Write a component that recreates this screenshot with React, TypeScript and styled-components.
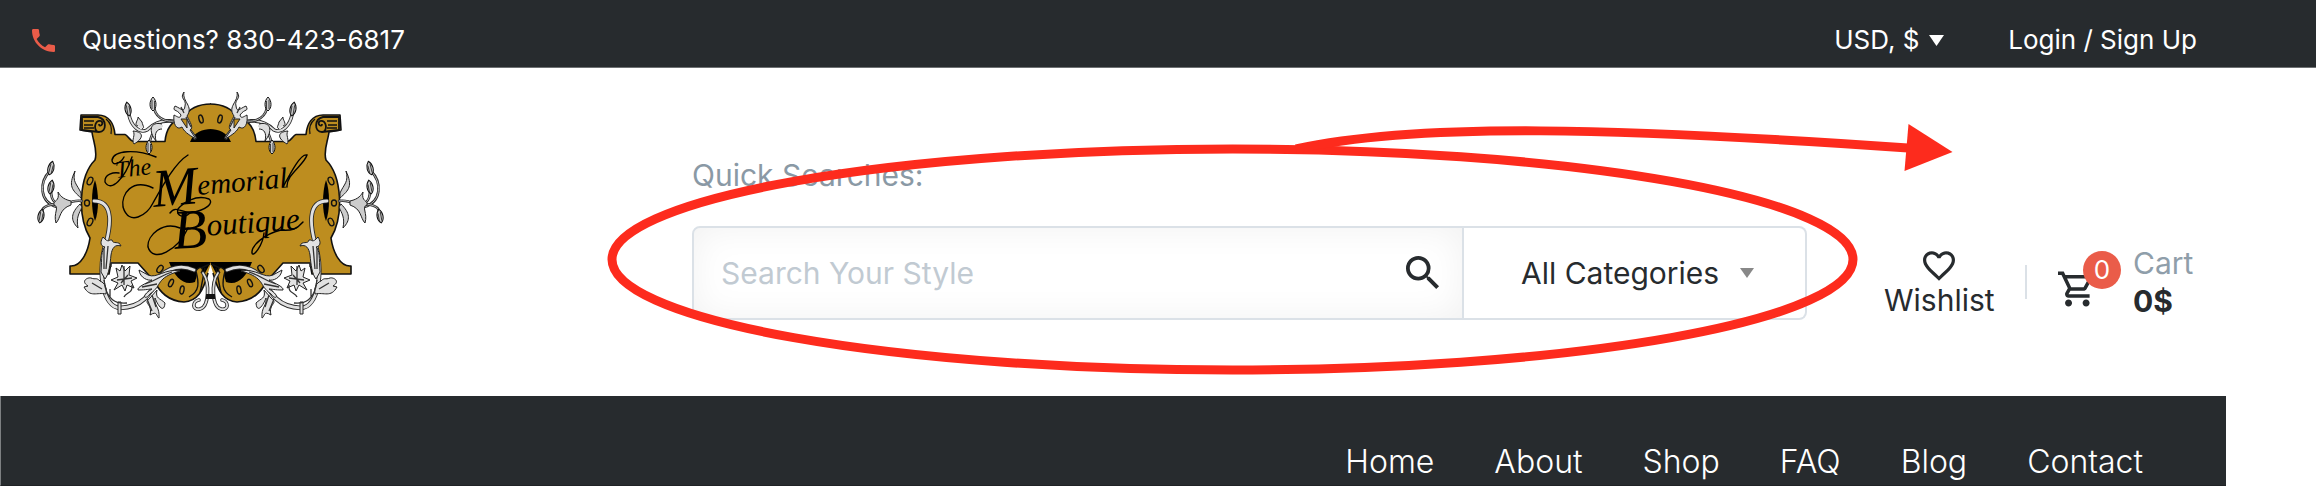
import React from "react";
import styled, { createGlobalStyle } from "styled-components";

const ink = "#272b2e";
const accent = "#ea5c49";
const gold = "#bd8d1f";
const line = "#dbe1e7";

const GlobalStyle = createGlobalStyle`
  * { box-sizing: border-box; }
  body {
    margin: 0;
    background: #fff;
    color: ${ink};
    font-family: Inter, "Open Sans", sans-serif;
    font-size: 30px;
    font-weight: 400;
  }
  a { color: inherit; text-decoration: none; }
  svg { display: block; }
`;

const TopBar = styled.div`
  display: flex;
  align-items: center;
  justify-content: space-between;
  padding: 20px 119px 7px 32px;
  background: ${ink};
  border-bottom: 1px solid #6e7173;
  color: #fff;
  font-size: 26px;
  line-height: 40px;
`;

const Phone = styled.a`
  display: flex;
  align-items: center;
  gap: 27px;
`;

const Account = styled.div`
  display: flex;
  align-items: center;
  gap: 64px;
`;

const SelectWrap = styled.label<{ $caretRight: number }>`
  position: relative;
  display: flex;
  align-items: center;
  svg {
    position: absolute;
    right: ${(p) => p.$caretRight}px;
    pointer-events: none;
  }
`;

const CurrencySelect = styled.select`
  appearance: none;
  width: 110px;
  padding: 0;
  border: 0;
  background: transparent;
  color: inherit;
  font: inherit;
`;

const Header = styled.header`
  display: flex;
  align-items: flex-end;
  padding: 24px 119px 76px 36px;
`;

const LogoLink = styled.a`
  flex: none;
  margin-right: 306px;
`;

const Search = styled.div`
  position: relative;
  flex: 1;
  margin-right: 77px;
`;

const Hint = styled.p`
  margin: 0 0 31px;
  color: #8a99a5;
  line-height: 40px;
`;

const SearchForm = styled.form`
  display: flex;
  height: 94px;
`;

const Field = styled.div`
  display: flex;
  align-items: center;
  flex: 1;
  padding: 0 22px 0 27px;
  border: 2px solid ${line};
  border-radius: 8px 0 0 8px;
  box-shadow: inset 0 0 36px rgba(0, 0, 0, 0.06);
`;

const SearchInput = styled.input`
  flex: 1;
  min-width: 0;
  padding: 0;
  border: 0;
  outline: 0;
  background: transparent;
  color: ${ink};
  font: inherit;
  &::placeholder { color: #c1cad2; opacity: 1; }
`;

const IconButton = styled.button`
  padding: 0;
  border: 0;
  background: transparent;
  color: ${ink};
  cursor: pointer;
`;

const CategorySelect = styled.select`
  appearance: none;
  width: 343px;
  height: 94px;
  padding: 0 0 0 57px;
  border: 2px solid ${line};
  border-left: 0;
  border-radius: 0 8px 8px 0;
  background: transparent;
  color: ${ink};
  font: inherit;
`;

const Annotation = styled.svg`
  position: absolute;
  left: -92px;
  bottom: -66px;
  pointer-events: none;
`;

const Actions = styled.div`
  display: flex;
  align-items: center;
  justify-content: space-between;
  width: 313px;
  line-height: 38px;
`;

const Wishlist = styled.a`
  display: flex;
  flex-direction: column;
  align-items: center;
  padding-top: 6px;
`;

const Divider = styled.span`
  width: 2px;
  height: 34px;
  background: ${line};
`;

const Cart = styled.a`
  display: flex;
  align-items: center;
  gap: 39px;
`;

const CartIcon = styled.span`
  position: relative;
  padding-top: 14px;
`;

const Badge = styled.span`
  position: absolute;
  top: -5px;
  left: 25px;
  width: 38px;
  border-radius: 50%;
  background: ${accent};
  color: #fff;
  font-size: 26px;
  line-height: 38px;
  text-align: center;
`;

const CartText = styled.span`
  display: flex;
  flex-direction: column;
  width: 64px;
  color: #8f9eaa;
  strong { color: ${ink}; font-weight: 700; }
`;

const Nav = styled.nav`
  display: flex;
  justify-content: flex-end;
  gap: 60px;
  margin-right: 90px;
  padding: 46px 83px 3px;
  background: ${ink};
  border-left: 1px solid #7d8082;
  border-bottom: 1px solid #1f2225;
  color: #fff;
  font-size: 32px;
  font-weight: 300;
  line-height: 40px;
`;

const Caret = ({ color, width, height }: { color: string; width: number; height: number }) => (
  <svg width={width} height={height} viewBox="0 0 14 10" preserveAspectRatio="none" aria-hidden="true">
    <path d="M0 0h14L7 10z" fill={color} />
  </svg>
);

const Leaf = ({ x, y, r }: { x: number; y: number; r: number }) => (
  <g transform={`translate(${x} ${y}) rotate(${r})`}>
    <path d="M0 7C-4 4-4-3 0-7C4-3 4 4 0 7Z" fill="#ccc" stroke="#111" strokeWidth="1" />
    <path d="M-1 5V-4M1.500 5V-3" stroke="#333" strokeWidth=".9" />
  </g>
);

const Vine = ({ d, w = 4 }: { d: string; w?: number }) => (
  <g fill="none" strokeLinecap="round">
    <path d={d} stroke="#2a2a2a" strokeWidth={w - 0.4} />
    <path d={d} stroke="#e0e0e0" strokeWidth={w - 2.2} />
  </g>
);

const Half = () => (
  <g strokeLinejoin="round">
    <path
      d="M211 104C197 104 188 110 183 118C172 119 166 130 165 141.500H134C129 141 128 135 125 134.500H115C114 124 109 115 98 115L81 115L80 130L92 132C93 141 98 151 95 160C79 176 77 216 90 238C88 252 81 267 70 266V274H109L111 263H138L154 281C160 292 168 301 184 302C197 301 203 292 208 273L211 263Z"
      fill={gold}
    />
    <path
      d="M211 104C197 104 188 110 183 118C172 119 166 130 165 141.500H134C129 141 128 135 125 134.500H115C114 124 109 115 98 115L81 115L80 130L92 132C93 141 98 151 95 160C79 176 77 216 90 238C88 252 81 267 70 266V274H109L111 263H138L154 281C160 292 168 301 184 302C197 301 203 292 208 273"
      fill="none" stroke="#111" strokeWidth="1.600"
    />
    <path d="M190 142C194 132 203 129 211 129V142ZM169 262H211L205 273L199 268L195 282C184 286 175 278 169 262Z" fill="#000" />
    <path d="M95 180C99 192 99 212 95 221C91 211 91 190 95 180Z" />
    <path d="M82 117H98C107 119 107 132 99 132L82 130ZM99 132C93 132 94 119 101 121C105 124 99 128 99 124" fill={gold} stroke="#111" strokeWidth="1.800" />
    <path d="M84 121H94M84 125H93M84 128H94M106 119C111 123 112 129 111 134" fill="none" stroke="#111" strokeWidth="1.300" />
    <path d="M189 297C200 291 199 283 196 271C200 264 205 269 201 273M205 268L200 293M201 268L210 264" fill={gold} stroke="#111" strokeWidth="1.400" />
    <g fill={gold} stroke="#111" strokeWidth="1.400">
      <ellipse cx="90" cy="181" rx="2.500" ry="4" transform="rotate(25 90 181)" />
      <ellipse cx="87" cy="203" rx="2.500" ry="3" />
      <ellipse cx="90" cy="222" rx="2.500" ry="4" transform="rotate(25 90 222)" />
      <ellipse cx="201" cy="119" rx="2" ry="4" transform="rotate(-15 201 119)" />
      <ellipse cx="160" cy="269" rx="2.500" ry="4" transform="rotate(35 160 269)" />
      <ellipse cx="171" cy="283" rx="2" ry="4" transform="rotate(25 171 283)" />
      <ellipse cx="182" cy="290" rx="2" ry="4" transform="rotate(10 182 290)" />
    </g>
    <Vine d="M195 138C181 114 158 119 147 130C139 134 131 125 129 115" />
    <Vine d="M180 120C170 123 157 121 154 108" w={3} />
    <Vine d="M161 126C153 129 151 137 149 144" w={3} />
    <Leaf x={128} y={109} r={-10} />
    <Leaf x={153} y={104} r={0} />
    <Leaf x={149} y={147} r={0} />
    <g fill="#ddd" stroke="#222" strokeWidth="1">
      <path d="M196 139C187 134 184 131 182 127C176 131 173 123 174 115C178 117 180 119 181 115C176 108 172 112 175 106C182 109 184 113 185 106C187 99 179 99 184 92C182 102 194 106 187 116C190 122 194 128 190 130Z" />
      <path d="M162 124C150 121 148 131 156 141C154 133 157 129 162 129M138 126C133 125 139 119 138 117L142 122C143 127 145 127 142 129M133 131C136 135 131 140 134 144C143 139 145 132 133 131" />
      <path d="M181 119L187 128L187 119Z" fill={gold} />
    </g>
    <Vine d="M82 201C71 199 65 206 57 207C39 202 39 182 50 171" w={3} />
    <Vine d="M59 205C51 201 51 195 51 190M55 204C42 206 42 209 41 216" w={3} />
    <Leaf x={51} y={168} r={14} />
    <Leaf x={51} y={187} r={10} />
    <Leaf x={41} y={216} r={10} />
    <g fill="#ccc" stroke="#222" strokeWidth="1">
      <path d="M81 198C72 190 68 186 75 171C72 182 77 184 81 193ZM80 204C71 213 70 220 78 228C76 217 79 214 82 207Z" />
      <path d="M71 201C62 199 60 195 58 192C60 202 53 200 54 205C60 207 53 213 56 223C61 218 59 209 71 205Z" />
    </g>
    <Vine d="M94 201C115 201 110 228 106 243C97 272 103 307 120 308C143 307 150 294 158 279C168 266 183 265 194 270" w={5} />
    <Vine d="M98 290C84 280 92 279 87 282" w={4} />
    <g fill="#e2e2e2" stroke="#222" strokeWidth="1">
      <path d="M101 272C102 258 101 250 105 247C99 246 101 240 103 237C109 244 109 239 112 240C113 245 119 240 121 246C115 244 112 248 111 255C110 265 109 274 105 279Z" />
      <path d="M106 294C97 292 90 298 84 287L88 286C80 281 88 277 91 278C96 280 96 277 100 281C105 283 107 288 106 294Z" />
      <path d="M139 270C140 278 148 281 152 280C145 284 137 287 138 290C147 290 149 289 152 289C140 296 145 301 150 294C163 285 155 278 180 271C165 268 157 279 148 275Z" />
      <path d="M150 298C142 304 153 303 150 315C158 310 156 317 159 318C160 307 154 306 155 298C158 306 164 314 165 303C160 298 155 299 157 290Z" />
      <path d="M122 265L120 271L116 268L118 277L111 280L118 283L114 290L122 285L125 291L127 285L134 288L131 281L137 278L129 275L130 266L125 271Z" />
      <path d="M118 302H121V314H118Z" />
    </g>
    <path d="M104 248L104 269M108 246L106 269M104 280C106 301 117 304 127 303M145 284C155 281 162 275 172 272M124 266V285M117 280L132 278M121 283L128 275M111 262V267M152 295L156 307M132 285C133 294 126 292 124 297M110 289V297M92 283L102 289M147 299L152 311M142 287L157 284M186 117L191 127M181 107L184 113" fill="none" stroke="#333" strokeWidth="1.300" />
    <Vine d="M203 273C210 283 209 307 200 309C192 311 192 301 199 300" w={4} />
    <path d="M206 294H211V299H206Z" fill="#111" />
  </g>
);

const Logo = () => (
  <svg width="350" height="228" viewBox="36 92 350 228" role="img" aria-label="The Memorial Boutique">
    <path d="M109 262H312V286H109Z" fill="#fff" />
    <Half />
    <g transform="translate(421 0) scale(-1 1)">
      <Half />
    </g>
    <g fontFamily="'Liberation Serif', serif" fontStyle="italic" fill="#000">
      <text x="116" y="178" fontSize="24" transform="rotate(-6 116 178)">The</text>
      <text x="154" y="207" fontSize="54" transform="rotate(-5 154 207)">
        M<tspan fontSize="29" dy="-8">emorial</tspan>
      </text>
      <text x="174" y="249" fontSize="56" transform="rotate(-4 174 249)">
        B<tspan fontSize="31" dy="-11">outique</tspan>
      </text>
    </g>
    <g fill="none" stroke="#000" strokeWidth="1.400" strokeLinecap="round">
      <path d="M156 157C136 149 114 150 112 160C112 167 121 163 124 157M132 157C125 178 111 193 105 182C104 174 114 172 119 173" />
      <path d="M153 188C132 178 121 194 123 207C129 227 147 215 153 203C163 185 175 163 188 155" />
      <path d="M180 228C163 221 147 235 148 247C153 264 178 250 188 228M170 213C175 206 180 211 190 213C207 210 214 203 209 199C196 194 183 203 178 209C176 216 184 219 190 213" />
      <path d="M287 187C286 175 304 165 307 155C301 153 291 172 283 187M264 233C263 245 253 258 252 253C251 246 264 234 281 230C292 231 297 229 303 222" />
    </g>
  </svg>
);

export default function App() {
  return (
    <>
      <GlobalStyle />
      <TopBar>
        <Phone href="tel:830-423-6817">
          <svg width="23" height="23" viewBox="3 3 18 18" fill={accent} aria-hidden="true">
            <path d="M6.620 10.790c1.440 2.830 3.760 5.140 6.590 6.590l2.200-2.200c.27-.27.67-.36 1.020-.24 1.120.37 2.330.57 3.570.57.55 0 1 .45 1 1V20c0 .55-.45 1-1 1-9.390 0-17-7.610-17-17 0-.55.45-1 1-1h3.500c.55 0 1 .45 1 1 0 1.250.2 2.450.57 3.570.11.35.03.74-.25 1.020z" />
          </svg>
          Questions? 830-423-6817
        </Phone>
        <Account>
          <SelectWrap $caretRight={0}>
            <CurrencySelect aria-label="Currency">
              <option>USD, $</option>
            </CurrencySelect>
            <Caret color="#fff" width={15} height={11} />
          </SelectWrap>
          <a href="#login">Login / Sign Up</a>
        </Account>
      </TopBar>

      <Header>
        <LogoLink href="#home"><Logo /></LogoLink>
        <Search>
          <Hint>Quick Searches:</Hint>
          <SearchForm>
            <Field>
              <SearchInput type="text" placeholder="Search Your Style" aria-label="Search Your Style" />
              <IconButton type="button" aria-label="Search">
                <svg width="34" height="34" viewBox="3 3 18 18" fill="currentColor" aria-hidden="true">
                  <path d="M15.500 14h-.79l-.28-.27A6.470 6.470 0 0 0 16 9.500 6.500 6.500 0 1 0 9.500 16c1.610 0 3.090-.59 4.230-1.570l.27.28v.79l5 4.990L20.490 19l-4.990-5zm-6 0C7.010 14 5 11.990 5 9.500S7.010 5 9.500 5 14 7.010 14 9.500 11.990 14 9.500 14z" />
                </svg>
              </IconButton>
            </Field>
            <SelectWrap $caretRight={53}>
              <CategorySelect aria-label="Category">
                <option>All Categories</option>
              </CategorySelect>
              <Caret color="#888" width={14} height={10} />
            </SelectWrap>
          </SearchForm>
          <Annotation width="1360" height="276" viewBox="600 110 1360 276" aria-hidden="true">
            <g fill="none" stroke="#fd2b1d" strokeWidth="9">
              <ellipse cx="1232.500" cy="259.500" rx="620.500" ry="110.500" />
              <path d="M1296 149C1420 122 1620 128 1908 148" />
            </g>
            <path d="M1908.500 124L1952.500 152L1904.500 171Z" fill="#fd2b1d" />
          </Annotation>
        </Search>
        <Actions>
          <Wishlist href="#wishlist">
            <svg width="32" height="30" viewBox="2 3 20 18.350" fill="currentColor" aria-hidden="true">
              <path d="M16.500 3c-1.740 0-3.410.81-4.500 2.090C10.910 3.810 9.240 3 7.500 3 4.420 3 2 5.420 2 8.500c0 3.780 3.400 6.860 8.550 11.540L12 21.350l1.450-1.320C18.600 15.360 22 12.280 22 8.500 22 5.420 19.580 3 16.500 3zm-4.400 15.550l-.1.100-.1-.1C7.140 14.240 4 11.390 4 8.500 4 6.500 5.500 5 7.500 5c1.540 0 3.040.99 3.570 2.360h1.870C13.460 5.990 14.960 5 16.500 5c2 0 3.500 1.500 3.500 3.500 0 2.890-3.140 5.740-7.900 10.050z" />
            </svg>
            Wishlist
          </Wishlist>
          <Divider />
          <Cart href="#cart">
            <CartIcon>
              <svg width="36" height="38" viewBox="1 2 20.500 20" fill="currentColor" aria-hidden="true">
                <path d="M15.550 13c.75 0 1.410-.41 1.750-1.030l3.580-6.490A.996.996 0 0 0 20.010 4H5.210l-.94-2H1v2h2l3.600 7.590-1.350 2.440C4.520 15.370 5.480 17 7 17h12v-2H7l1.100-2h7.450zM6.160 6h12.150l-2.760 5H8.530L6.160 6zM7 18c-1.100 0-1.990.9-1.990 2S5.900 22 7 22s2-.9 2-2-.9-2-2-2zm10 0c-1.100 0-1.990.9-1.990 2s.89 2 1.990 2 2-.9 2-2-.9-2-2-2z" />
              </svg>
              <Badge>0</Badge>
            </CartIcon>
            <CartText>
              Cart
              <strong>0$</strong>
            </CartText>
          </Cart>
        </Actions>
      </Header>

      <Nav aria-label="Main">
        <a href="#home">Home</a>
        <a href="#about">About</a>
        <a href="#shop">Shop</a>
        <a href="#faq">FAQ</a>
        <a href="#blog">Blog</a>
        <a href="#contact">Contact</a>
      </Nav>
    </>
  );
}
